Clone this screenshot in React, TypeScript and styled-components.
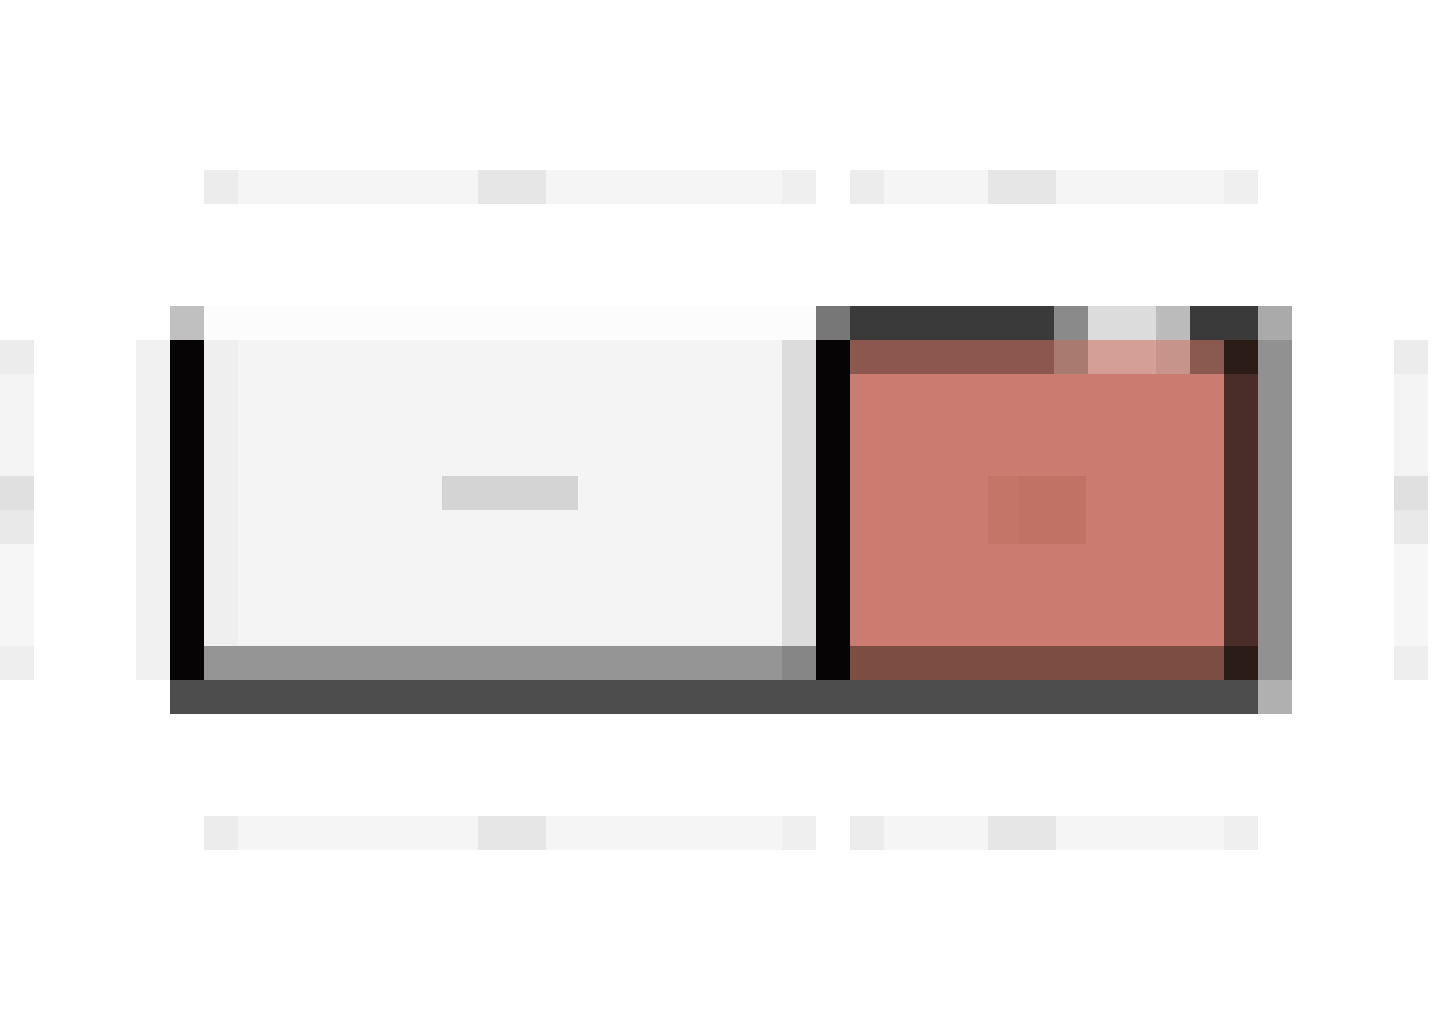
import styled, { createGlobalStyle } from "styled-components";

const cell = 34;

const GlobalStyle = createGlobalStyle`
  html, body {
    margin: 0;
    padding: 0;
    background: #ffffff;
    font-family: "Liberation Sans", Arial, sans-serif;
  }
`;

const Page = styled.main`
  width: 1440px;
  height: 1018px;
  display: flex;
  flex-direction: column;
  padding-top: ${cell * 5}px;
  box-sizing: border-box;
  overflow: hidden;
`;

const HintRow = styled.div<{ $top?: number }>`
  display: flex;
  gap: ${cell}px;
  height: ${cell}px;
  padding-left: ${cell * 6}px;
  margin-top: ${(p) => p.$top ?? 0}px;
`;

const HintLine = styled.div<{ $w: number; $spot: number }>`
  width: ${(p) => p.$w}px;
  height: 100%;
  background: linear-gradient(
    to right,
    #ececec 0 ${cell}px,
    #f5f5f5 ${cell}px ${(p) => p.$spot}px,
    #e6e6e6 ${(p) => p.$spot}px ${(p) => p.$spot + cell * 2}px,
    #f5f5f5 ${(p) => p.$spot + cell * 2}px calc(100% - ${cell}px),
    #efefef calc(100% - ${cell}px) 100%
  );
`;

const Stage = styled.section`
  display: flex;
  align-items: flex-start;
  height: ${cell * 12}px;
  margin-top: ${cell * 3}px;
`;

const EdgeStrip = styled.div<{ $gap: number }>`
  width: ${cell}px;
  height: ${cell * 10}px;
  margin-top: ${cell}px;
  margin-right: ${(p) => p.$gap}px;
  background: linear-gradient(
    to bottom,
    #ececec 0 ${cell}px,
    #f4f4f4 ${cell}px ${cell * 4}px,
    #e0e0e0 ${cell * 4}px ${cell * 5}px,
    #e9e9e9 ${cell * 5}px ${cell * 6}px,
    #f6f6f6 ${cell * 6}px ${cell * 9}px,
    #eeeeee ${cell * 9}px 100%
  );
`;

const ShadeStrip = styled.div`
  width: ${cell}px;
  height: ${cell * 10}px;
  margin-top: ${cell}px;
  background: #f1f1f1;
`;

const Switch = styled.div`
  display: flex;
  flex-direction: column;
  width: ${cell * 33}px;
  margin-right: ${cell * 3}px;
`;

const SwitchBody = styled.div`
  display: flex;
  height: ${cell * 11}px;
`;

const Side = styled.div<{ $w: number }>`
  display: flex;
  flex-direction: column;
  width: ${(p) => p.$w}px;
`;

const Strip = styled.div`
  display: flex;
  height: ${cell}px;
  flex: none;
`;

const Cell = styled.div<{ $w: number; $c: string }>`
  width: ${(p) => p.$w}px;
  background: ${(p) => p.$c};
  flex: none;
`;

const SideMain = styled.div`
  display: flex;
  flex: 1;
`;

const Rail = styled.div`
  width: ${cell}px;
  background: #060404;
  flex: none;
`;

const OffInner = styled.div`
  display: flex;
  flex-direction: column;
  flex: 1;
`;

const OffFace = styled.div`
  flex: 1;
  display: flex;
  align-items: center;
  justify-content: center;
  background: #f4f4f4;
  box-shadow: inset ${cell}px 0 #efefef, inset -${cell}px 0 #dcdcdc;
`;

const OffMark = styled.span`
  width: ${cell * 4}px;
  height: ${cell}px;
  background: #d4d4d4;
`;

const Knob = styled.div`
  display: flex;
  flex-direction: column;
  width: ${cell * 12}px;
  flex: none;
`;

const KnobBody = styled.div`
  display: flex;
  flex: 1;
`;

const KnobFace = styled.div`
  flex: 1;
  display: flex;
  align-items: center;
  justify-content: center;
  background: #cb7b70;
`;

const KnobGrip = styled.span`
  width: 98px;
  height: ${cell * 2}px;
  background: linear-gradient(to right, #c47568 0 30px, #c07265 30px 100%);
`;

const Base = styled.div`
  display: flex;
  height: ${cell}px;
`;

const offCap = [
  { w: cell, c: "#c0c0c0" },
  { w: cell * 18, c: "#fcfcfc" },
];

const onCap = [
  { w: cell, c: "#777777" },
  { w: cell * 6, c: "#3a3a3a" },
  { w: cell, c: "#8a8a8a" },
  { w: cell * 2, c: "#dcdcdc" },
  { w: cell, c: "#bbbbbb" },
  { w: cell * 2, c: "#3a3a3a" },
  { w: cell, c: "#aaaaaa" },
];

const knobTop = [
  { w: cell * 6, c: "#8b574e" },
  { w: cell, c: "#a97a70" },
  { w: cell * 2, c: "#d4a096" },
  { w: cell, c: "#c6948a" },
  { w: cell, c: "#8b5a4e" },
  { w: cell, c: "#2c1c18" },
];

function App() {
  return (
    <Page>
      <GlobalStyle />
      <HintRow>
        <HintLine $w={cell * 18} $spot={cell * 8 + 2} />
        <HintLine $w={cell * 12} $spot={cell * 4 + 2} />
      </HintRow>

      <Stage>
        <EdgeStrip $gap={cell * 3} />
        <ShadeStrip />
        <Switch role="switch" aria-checked="true">
          <SwitchBody>
            <Side $w={cell * 19}>
              <Strip>
                {offCap.map((s, i) => (
                  <Cell key={i} $w={s.w} $c={s.c} />
                ))}
              </Strip>
              <SideMain>
                <Rail />
                <OffInner>
                  <OffFace>
                    <OffMark />
                  </OffFace>
                  <Strip>
                    <Cell $w={cell * 17} $c="#959595" />
                    <Cell $w={cell} $c="#868686" />
                  </Strip>
                </OffInner>
              </SideMain>
            </Side>

            <Side $w={cell * 14}>
              <Strip>
                {onCap.map((s, i) => (
                  <Cell key={i} $w={s.w} $c={s.c} />
                ))}
              </Strip>
              <SideMain>
                <Rail />
                <Knob>
                  <Strip>
                    {knobTop.map((s, i) => (
                      <Cell key={i} $w={s.w} $c={s.c} />
                    ))}
                  </Strip>
                  <KnobBody>
                    <KnobFace>
                      <KnobGrip />
                    </KnobFace>
                    <Cell $w={cell} $c="#4a2d28" />
                  </KnobBody>
                  <Strip>
                    <Cell $w={cell * 11} $c="#7c4e42" />
                    <Cell $w={cell} $c="#2c1c18" />
                  </Strip>
                </Knob>
                <Cell $w={cell} $c="#919191" />
              </SideMain>
            </Side>
          </SwitchBody>
          <Base>
            <Cell $w={cell * 32} $c="#4d4d4d" />
            <Cell $w={cell} $c="#b0b0b0" />
          </Base>
        </Switch>
        <EdgeStrip $gap={0} />
      </Stage>

      <HintRow $top={cell * 3}>
        <HintLine $w={cell * 18} $spot={cell * 8 + 2} />
        <HintLine $w={cell * 12} $spot={cell * 4 + 2} />
      </HintRow>
    </Page>
  );
}

export default App;
